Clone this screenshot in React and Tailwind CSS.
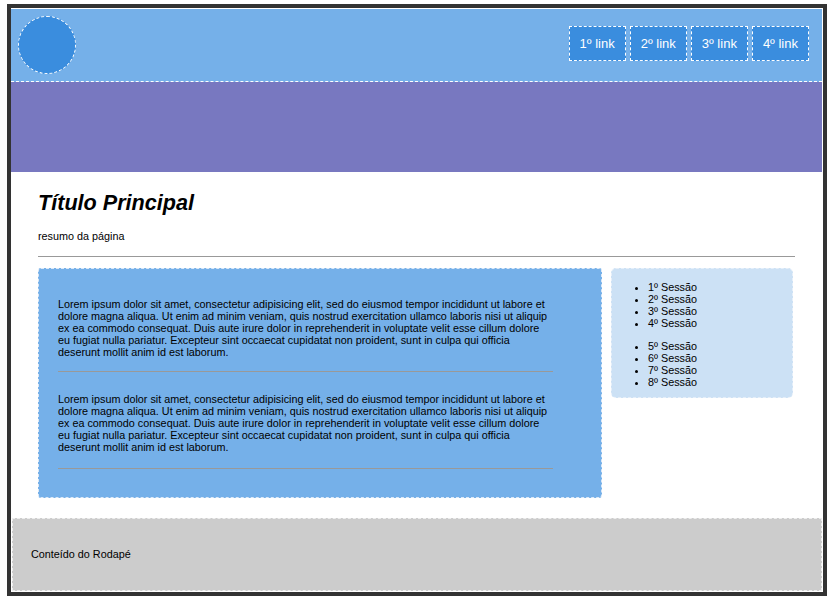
import React from "react";

const lorem =
  "Lorem ipsum dolor sit amet, consectetur adipisicing elit, sed do eiusmod tempor incididunt ut labore et dolore magna aliqua. Ut enim ad minim veniam, quis nostrud exercitation ullamco laboris nisi ut aliquip ex ea commodo consequat. Duis aute irure dolor in reprehenderit in voluptate velit esse cillum dolore eu fugiat nulla pariatur. Excepteur sint occaecat cupidatat non proident, sunt in culpa qui officia deserunt mollit anim id est laborum.";

export default function App() {
  const links = ["1º link", "2º link", "3º link", "4º link"];
  const s1 = ["1º Sessão", "2º Sessão", "3º Sessão", "4º Sessão"];
  const s2 = ["5º Sessão", "6º Sessão", "7º Sessão", "8º Sessão"];
  return (
    <div
      className="bg-white w-[831px] h-[600px] pt-[4px] pl-[7px] text-black text-[10.8px]"
      style={{ fontFamily: '"Liberation Sans", Arial, sans-serif' }}
    >
      <div className="w-[820px] h-[592px] border-4 border-[#333333] bg-white">
        <div className="h-full flex flex-col pt-[1px] pr-[1px] pb-[1px]">
          <header className="h-[73px] bg-[#75b0e9] border-b border-dashed border-white flex items-start justify-between pl-[7px] pr-[13px]">
            <div className="mt-[7px] w-[58px] h-[58px] rounded-full bg-[#3a8dde] border border-dashed border-white" />
            <nav className="mt-[17px] flex gap-[4px]">
              {links.map((l) => (
                <a
                  key={l}
                  className="block h-[35px] px-[10px] border border-dashed border-white bg-[#3a8dde] text-white text-[13px] leading-[33px]"
                >
                  {l}
                </a>
              ))}
            </nav>
          </header>
          <div className="h-[90px] bg-[#7878c0]" />
          <main className="flex-1 px-[27px]">
            <h1 className="mt-[18px] text-[21.6px] leading-[25px] font-bold italic">
              Título Principal
            </h1>
            <p className="mt-[15px] leading-[12px]">resumo da página</p>
            <hr className="mt-[14px] border-0 border-t border-[#999999]" />
            <div className="mt-[11px] flex items-start gap-[9px]">
              <article className="w-[564px] bg-[#75b0e9] border border-dashed border-[#dde9f7] rounded-[3px] pl-[19px] pt-[29px] pb-[28px]">
                <p className="w-[495px] leading-[12px]">{lorem}</p>
                <hr className="w-[495px] mt-[13px] border-0 border-t border-[#999999]" />
                <p className="w-[495px] mt-[21px] leading-[12px]">{lorem}</p>
                <hr className="w-[495px] mt-[15px] border-0 border-t border-[#999999]" />
              </article>
              <aside className="w-[182px] bg-[#cce1f5] border border-dashed border-[#e6eff9] rounded-[5px] pl-[36px] pt-[12px] pb-[9px]">
                <ul className="list-disc leading-[12px]">
                  {s1.map((s) => (
                    <li key={s}>{s}</li>
                  ))}
                </ul>
                <ul className="list-disc leading-[12px] mt-[11px]">
                  {s2.map((s) => (
                    <li key={s}>{s}</li>
                  ))}
                </ul>
              </aside>
            </div>
          </main>
          <footer className="ml-[1px] h-[73px] bg-[#cccccc] border border-dashed border-[#eeeeee] flex items-center pl-[18px]">
            <p>Conteído do Rodapé</p>
          </footer>
        </div>
      </div>
    </div>
  );
}
